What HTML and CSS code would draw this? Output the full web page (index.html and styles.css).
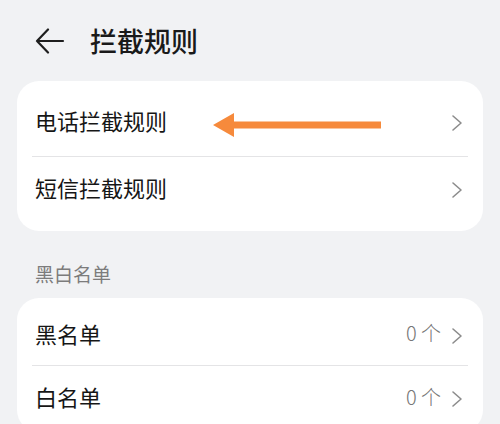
FILE: index.html
```html
<!DOCTYPE html>
<html lang="zh-CN">
<head>
<meta charset="utf-8">
<link rel="stylesheet" href="styles.css">
</head>
<body>
<div class="page">
  <header class="topbar">
    <svg class="back" width="30" height="28" viewBox="0 0 30 28"><path d="M2 13 H28 M13 1.5 L2 13 L13 24.5" fill="none" stroke="#1e1e1e" stroke-width="2.2" stroke-linecap="round" stroke-linejoin="round"/></svg>
    <h1 class="title">拦截规则</h1>
  </header>

  <section class="card card-first">
    <div class="row row-a">
      <span class="label">电话拦截规则</span>
      <svg class="chev" width="12" height="18" viewBox="0 0 12 18"><path d="M2 2 L10 9 L2 16" fill="none" stroke="#8c8c8c" stroke-width="1.6" stroke-linecap="round" stroke-linejoin="round"/></svg>
      <svg class="annot" width="170" height="26" viewBox="0 0 170 26"><polygon points="0,13 21,1 21,9.5 168,9.5 168,16.5 21,16.5 21,25" fill="#f68a3c"/></svg>
    </div>
    <div class="divider"></div>
    <div class="row row-b">
      <span class="label">短信拦截规则</span>
      <svg class="chev" width="12" height="18" viewBox="0 0 12 18"><path d="M2 2 L10 9 L2 16" fill="none" stroke="#8c8c8c" stroke-width="1.6" stroke-linecap="round" stroke-linejoin="round"/></svg>
    </div>
  </section>

  <div class="section-head">黑白名单</div>

  <section class="card card-second">
    <div class="row row-c">
      <span class="label">黑名单</span>
      <span class="count">0 个</span>
      <svg class="chev" width="12" height="18" viewBox="0 0 12 18"><path d="M2 2 L10 9 L2 16" fill="none" stroke="#8c8c8c" stroke-width="1.6" stroke-linecap="round" stroke-linejoin="round"/></svg>
    </div>
    <div class="divider"></div>
    <div class="row row-b">
      <span class="label">白名单</span>
      <span class="count">0 个</span>
      <svg class="chev" width="12" height="18" viewBox="0 0 12 18"><path d="M2 2 L10 9 L2 16" fill="none" stroke="#8c8c8c" stroke-width="1.6" stroke-linecap="round" stroke-linejoin="round"/></svg>
    </div>
  </section>
</div>
</body>
</html>
```
FILE: styles.css
```css
* { box-sizing: border-box; }
html, body {
  margin: 0;
  padding: 0;
  background: #f1f2f4;
  font-family: "Noto Sans CJK SC", "Noto Sans", sans-serif;
  color: #1a1a1a;
  overflow: hidden;
}
.page {
  width: 500px;
  height: 424px;
  overflow: hidden;
}
.topbar {
  height: 81px;
  display: flex;
  align-items: center;
  padding-left: 35px;
  padding-top: 2px;
}
.back { display: block; margin-right: 25px; }
.title {
  margin: 0;
  font-size: 27px;
  font-weight: 500;
  line-height: 1;
  color: #1a1a1a;
  padding-bottom: 2px;
}
.card {
  margin: 0 17px;
  background: #ffffff;
  border-radius: 22px;
}
.card-first { padding: 8px 0; }
.card-second { padding-top: 8px; }
.row {
  position: relative;
  display: flex;
  align-items: center;
  padding: 0 20px 0 18px;
}
.row-a { height: 67px; }
.row-b { height: 66px; }
.row-c { height: 59px; }
.label {
  flex: 1;
  font-size: 22px;
  line-height: 1;
  color: #161616;
  padding-bottom: 6px;
}
.count {
  font-size: 20px;
  line-height: 1;
  color: #777777;
  margin-right: 10px;
  font-weight: 300;
  padding-bottom: 5px;
}
.chev { display: block; }
.divider {
  height: 1px;
  background: #e4e4e6;
  margin: 0 15px;
}
.section-head {
  height: 67px;
  padding: 33px 0 0 35px;
  font-size: 19px;
  line-height: 1;
  color: #7c7c7c;
}
.annot {
  position: absolute;
  left: 196px;
  top: 23px;
}
```
